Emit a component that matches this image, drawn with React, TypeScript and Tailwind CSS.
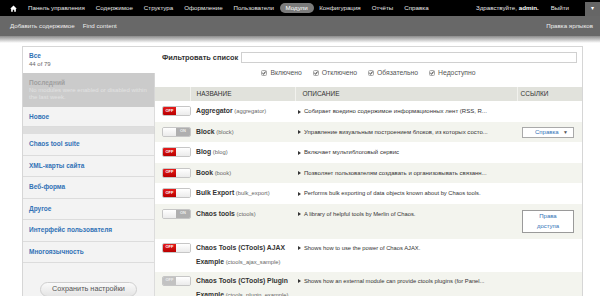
import React from 'react';

type ModState = 'on' | 'off' | 'locked';

interface Mod {
  name: string[];
  machine: string;
  desc: string;
  state: ModState;
  link?: 'help' | 'perm';
}

const navItems = [
  'Панель управления',
  'Содержимое',
  'Структура',
  'Оформление',
  'Пользователи',
  'Модули',
  'Конфигурация',
  'Отчёты',
  'Справка',
];

const tabs = [
  'Chaos tool suite',
  'XML-карты сайта',
  'Веб-форма',
  'Другое',
  'Интерфейс пользователя',
  'Многоязычность',
];

const modules: Mod[] = [
  { name: ['Aggregator'], machine: 'aggregator', desc: 'Собирает воедино содержимое информационных лент (RSS, R...', state: 'off' },
  { name: ['Block'], machine: 'block', desc: 'Управление визуальным построением блоков, из которых состо...', state: 'on', link: 'help' },
  { name: ['Blog'], machine: 'blog', desc: 'Включает мультиблоговый сервис', state: 'off' },
  { name: ['Book'], machine: 'book', desc: 'Позволяет пользователям создавать и организовывать связанн...', state: 'off' },
  { name: ['Bulk Export'], machine: 'bulk_export', desc: 'Performs bulk exporting of data objects known about by Chaos tools.', state: 'off' },
  { name: ['Chaos tools'], machine: 'ctools', desc: 'A library of helpful tools by Merlin of Chaos.', state: 'on', link: 'perm' },
  { name: ['Chaos Tools (CTools) AJAX', 'Example'], machine: 'ctools_ajax_sample', desc: 'Shows how to use the power of Chaos AJAX.', state: 'off' },
  { name: ['Chaos Tools (CTools) Plugin', 'Example'], machine: 'ctools_plugin_example', desc: 'Shows how an external module can provide ctools plugins (for Panel...', state: 'locked' },
];

function HomeIcon() {
  return (
    <svg width="7" height="7" viewBox="0 0 8 8">
      <path d="M4 0.6 L0.2 4.2 L1.3 4.2 L1.3 7.6 L3.2 7.6 L3.2 5.4 L4.8 5.4 L4.8 7.6 L6.7 7.6 L6.7 4.2 L7.8 4.2 Z" fill="#fff" />
    </svg>
  );
}

function Check() {
  return (
    <svg width="6" height="6" viewBox="0 0 6 6" className="shrink-0">
      <rect x="0.5" y="0.5" width="5" height="5" rx="1" fill="#f4f4f4" stroke="#a8a8a8" />
      <path d="M1.4 3.1 L2.5 4.2 L4.7 1.5" stroke="#333" strokeWidth="1" fill="none" />
    </svg>
  );
}

function Toggle({ state }: { state: ModState }) {
  if (state === 'on') {
    return (
      <div className="flex w-[29px] h-[10px] rounded-[2px] border border-[#c6c6c6] overflow-hidden">
        <div className="flex-1 bg-linear-to-b from-white to-[#ebebeb]" />
        <div className="w-[14px] bg-[#afafaf] text-[#eee] text-[4px] font-bold flex items-center justify-center">ON</div>
      </div>
    );
  }
  const left = state === 'off' ? 'bg-linear-to-b from-[#e41a1a] to-[#b90000] text-white' : 'bg-[#c2c2c2] text-[#eee]';
  return (
    <div className="flex w-[29px] h-[10px] rounded-[2px] border border-[#c6c6c6] overflow-hidden">
      <div className={`w-[13px] text-[4px] font-bold flex items-center justify-center ${left}`}>OFF</div>
      <div className="flex-1 bg-linear-to-b from-white to-[#ebebeb]" />
    </div>
  );
}

export default function App() {
  return (
    <div className="w-[600px] h-[296px] overflow-hidden bg-white font-['Liberation_Sans',Arial,sans-serif]">
      {/* верхнее меню */}
      <div className="h-[16px] bg-black flex items-center text-[6.2px] text-[#e6e6e6]">
        <div className="pl-[10px] pr-[5.5px] flex items-center">
          <HomeIcon />
        </div>
        <nav className="flex items-center">
          {navItems.map((item) =>
            item === 'Модули' ? (
              <span key={item} className="px-[6px] h-[10px] leading-[10px] rounded-full bg-[#7b7b7b] text-white">
                {item}
              </span>
            ) : (
              <span key={item} className="px-[5.5px]">
                {item}
              </span>
            )
          )}
        </nav>
        <div className="ml-auto flex items-center h-full">
          <span className="px-[6px]">
            Здравствуйте, <b className="text-white">admin.</b>
          </span>
          <span className="px-[6px]">Выйти</span>
          <div className="ml-[10px] w-[15px] h-[14px] mt-[1px] bg-[#666] flex items-center justify-center text-[6px] text-white">
            ▾
          </div>
        </div>
      </div>

      {/* ярлыки */}
      <div className="h-[20px] bg-[#686868] flex items-center text-[6.2px] text-[#eee] pl-[10px] pr-[7px]">
        <span>Добавить содержимое</span>
        <span className="ml-[8px]">Find content</span>
        <span className="ml-auto">Правка ярлыков</span>
      </div>
      <div className="h-[7px] bg-linear-to-b from-[#8c8c8c] to-white" />

      <div className="pl-[22px] pr-[17px] pt-[3px]">
        <div className="flex border border-[#d6d6d6] h-[260px]">
          {/* вертикальные вкладки */}
          <div className="w-[132px] shrink-0 flex flex-col bg-[#f3f3f3]">
            <div className="h-[26px] bg-white px-[6px] pt-[4px]">
              <div className="text-[6.5px] leading-[9px] font-bold text-[#3272b6]">Все</div>
              <div className="text-[6px] leading-[9px] text-[#666]">44 of 79</div>
            </div>
            <div className="h-[34px] bg-[#cbcbcb] px-[6px] pt-[6px] border-r border-[#d6d6d6]">
              <div className="text-[6.5px] leading-[8px] font-bold text-[#a0a0a0]">Последний</div>
              <div className="text-[6px] leading-[7px] text-[#e2e2e2]">
                No modules were enabled or disabled within the last week.
              </div>
            </div>
            <div className="h-[20px] px-[6px] flex items-center border-b border-r border-[#dcdcdc] text-[6.5px] font-bold text-[#3272b6]">
              Новое
            </div>
            <div className="h-[7px] bg-[#dedede] border-r border-[#d6d6d6]" />
            {tabs.map((t) => (
              <div
                key={t}
                className="h-[21.5px] px-[6px] flex items-center border-b border-r border-[#dcdcdc] text-[6.5px] font-bold text-[#3272b6]"
              >
                {t}
              </div>
            ))}
            <div className="flex-1 border-r border-[#dcdcdc] flex justify-center pt-[19px]">
              <button className="h-[15px] w-[97px] rounded-full border border-[#cfcfcf] bg-linear-to-b from-[#fafafa] to-[#e4e4e4] text-[7.3px] text-[#555]">
                Сохранить настройки
              </button>
            </div>
          </div>

          {/* список модулей */}
          <div className="flex-1 min-w-0 flex flex-col">
            <div className="flex items-center pl-[7px] pr-[5px] pt-[5px]">
              <span className="text-[7.4px] font-bold text-[#333]">Фильтровать список</span>
              <div className="flex-1 ml-[3px] h-[11px] border border-[#d0d0d0] bg-white" />
            </div>
            <div className="flex justify-center items-center gap-[11px] mt-[5px] h-[10px] text-[6.8px] text-[#555]">
              {['Включено', 'Отключено', 'Обязательно', 'Недоступно'].map((c) => (
                <label key={c} className="flex items-center gap-[3px]">
                  <Check />
                  {c}
                </label>
              ))}
            </div>

            <table className="mt-[9px] w-full table-fixed text-[#333]">
              <colgroup>
                <col className="w-[35px]" />
                <col className="w-[105px]" />
                <col />
                <col className="w-[65px]" />
              </colgroup>
              <thead>
                <tr className="h-[14px] bg-[#e1e2dc] text-[6.5px] leading-[14px] uppercase text-left">
                  <th className="font-normal" />
                  <th className="font-normal pl-[6px] border-l border-[#f2f2ee]">Название</th>
                  <th className="font-normal pl-[7px] border-l border-[#f2f2ee]">Описание</th>
                  <th className="font-normal pl-[3px] border-l border-[#f2f2ee]">Ссылки</th>
                </tr>
              </thead>
              <tbody className="text-[6px] leading-[14.5px]">
                {modules.map((m, i) => {
                  const multi = m.name.length > 1;
                  return (
                    <tr key={m.machine} className={i % 2 === 1 ? 'bg-[#f3f4ee]' : 'bg-white'}>
                      <td className={`align-top pl-[7px] ${multi ? 'pt-[4px]' : 'pt-[5px]'}`}>
                        <Toggle state={m.state} />
                      </td>
                      <td className={`align-top pl-[6px] ${multi ? 'py-[2px]' : 'py-[3px]'}`}>
                        {m.name.map((n, k) => (
                          <React.Fragment key={k}>
                            {k > 0 && <br />}
                            <span className="text-[6.8px] font-bold">{n}</span>
                          </React.Fragment>
                        ))}{' '}
                        <span className="text-[5.8px] text-[#666]">({m.machine})</span>
                      </td>
                      <td
                        className={`align-top pl-[3px] whitespace-nowrap overflow-hidden ${multi ? 'py-[2px]' : 'py-[3px]'} ${
                          /[а-яА-Я]/.test(m.desc) ? 'text-[6px]' : 'text-[5.8px]'
                        }`}
                      >
                        <span className="inline-block w-0 h-0 border-l-[3px] border-y-[2px] border-y-transparent border-l-[#333] mr-[3px] align-middle" />
                        {m.desc}
                      </td>
                      <td className="align-top pl-[5px] py-[3px]">
                        {m.link === 'help' && (
                          <div className="mt-[2px] w-[52px] h-[11px] border border-[#a9a9a9] bg-white flex items-center justify-between pl-[12px] pr-[5px] text-[6px] leading-[9px] text-[#3272b6]">
                            <span>Справка</span>
                            <span className="text-[5px] text-[#555]">▼</span>
                          </div>
                        )}
                        {m.link === 'perm' && (
                          <div className="my-[3px] w-[52px] h-[23px] border border-[#9a9a9a] bg-white flex flex-col items-center justify-center text-[6px] leading-[10px] text-[#3272b6]">
                            <span>Права</span>
                            <span>доступа</span>
                          </div>
                        )}
                      </td>
                    </tr>
                  );
                })}
              </tbody>
            </table>
          </div>
        </div>
      </div>
    </div>
  );
}
